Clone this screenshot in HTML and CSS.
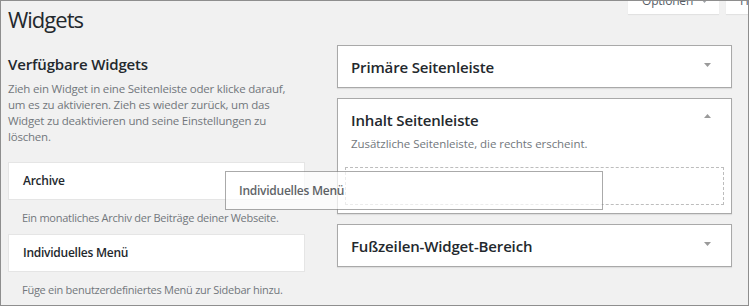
FILE: index.html
```html
<!DOCTYPE html>
<html lang="de">
<head>
<meta charset="utf-8">
<title>Widgets</title>
<link rel="stylesheet" href="styles.css">
</head>
<body>
<div class="frame">
  <header class="header">
    <h1 class="title">Widgets</h1>
    <div class="tabs">
      <div class="tab tab-options">Optionen <svg class="tab-arrow" width="7" height="4" viewBox="0 0 7 4"><polygon points="0,0 7,0 3.5,4" fill="#a0a5aa"/></svg></div>
      <div class="tab tab-help">Hilfe <svg class="tab-arrow" width="7" height="4" viewBox="0 0 7 4"><polygon points="0,0 7,0 3.5,4" fill="#a0a5aa"/></svg></div>
    </div>
  </header>
  <main class="main">
    <section class="available">
      <h2 class="section-title">Verfügbare Widgets</h2>
      <p class="section-desc">Zieh ein Widget in eine Seitenleiste oder klicke darauf, um es zu aktivieren. Zieh es wieder zurück, um das Widget zu deaktivieren und seine Einstellungen zu löschen.</p>
      <div class="widget">Archive</div>
      <p class="widget-desc">Ein monatliches Archiv der Beiträge deiner Webseite.</p>
      <div class="widget widget-second">Individuelles Menü</div>
      <p class="widget-desc">Füge ein benutzerdefiniertes Menü zur Sidebar hinzu.</p>
    </section>
    <section class="sidebars">
      <div class="sidebar">
        <div class="sidebar-head">
          <h3 class="sidebar-title">Primäre Seitenleiste</h3>
          <svg class="arrow arrow-down" width="7" height="4" viewBox="0 0 7 4"><polygon points="0,0 7,0 3.5,4" fill="#9a9a9a"/></svg>
        </div>
      </div>
      <div class="sidebar sidebar-open">
        <div class="sidebar-head">
          <h3 class="sidebar-title">Inhalt Seitenleiste</h3>
          <svg class="arrow arrow-up" width="7" height="4" viewBox="0 0 7 4"><polygon points="0,4 7,4 3.5,0" fill="#9a9a9a"/></svg>
        </div>
        <p class="sidebar-desc">Zusätzliche Seitenleiste, die rechts erscheint.</p>
        <div class="placeholder"></div>
      </div>
      <div class="sidebar">
        <div class="sidebar-head">
          <h3 class="sidebar-title">Fußzeilen-Widget-Bereich</h3>
          <svg class="arrow arrow-down" width="7" height="4" viewBox="0 0 7 4"><polygon points="0,0 7,0 3.5,4" fill="#9a9a9a"/></svg>
        </div>
      </div>
    </section>
  </main>
  <div class="drag-helper">Individuelles Menü</div>
</div>
</body>
</html>
```

FILE: styles.css
```css
* { box-sizing: border-box; }

html, body {
  margin: 0;
  padding: 0;
  background: #ffffff;
}

body {
  font-family: "Open Sans", "Noto Sans", sans-serif;
  color: #23282d;
}

.frame {
  position: relative;
  width: 749px;
  height: 306px;
  border: 1px solid #8e8e8e;
  background: #f1f1f1;
  overflow: hidden;
}

.header {
  display: flex;
  align-items: flex-start;
}

.title {
  flex: 1;
  margin: 4px 0 0 7px;
  font-size: 22px;
  line-height: 29px;
  font-weight: 400;
  letter-spacing: -1px;
  color: #23282d;
}

.tabs {
  display: flex;
  gap: 7px;
  margin-top: -10px;
  margin-right: -48px;
}

.tab {
  height: 23px;
  padding-left: 14px;
  background: #ffffff;
  font-size: 12px;
  line-height: 20px;
  letter-spacing: -0.2px;
  color: #555d66;
  box-shadow: 0 1px 1px rgba(0, 0, 0, 0.06);
  white-space: nowrap;
}

.tab-options { width: 91px; }
.tab-help { width: 70px; }

.tab-arrow {
  margin-left: 5px;
  vertical-align: 2px;
}

.main {
  display: flex;
  align-items: flex-start;
  gap: 32px;
  padding-left: 7px;
}

.available {
  width: 297px;
  margin-top: 20px;
}

.section-title {
  margin: 0;
  font-size: 15px;
  line-height: 20px;
  font-weight: 600;
  letter-spacing: -0.15px;
}

.section-desc {
  max-width: 291px;
  margin: 7px 0 0;
  font-size: 11.5px;
  line-height: 16px;
  letter-spacing: -0.2px;
  color: #72777c;
}

.widget {
  margin-top: 17px;
  height: 38px;
  padding: 10px 14px;
  background: #ffffff;
  border: 1px solid #e5e5e5;
  font-size: 12px;
  line-height: 16px;
  font-weight: 600;
  letter-spacing: -0.25px;
}

.widget-second { margin-top: 8px; }

.widget-desc {
  margin: 10px 0 0;
  padding-left: 14px;
  font-size: 11px;
  line-height: 16px;
  letter-spacing: -0.27px;
  color: #72777c;
  white-space: nowrap;
}

.sidebars {
  width: 395px;
  margin-top: 11px;
  display: flex;
  flex-direction: column;
  gap: 10px;
}

.sidebar {
  background: #ffffff;
  border: 1px solid #a9a9a9;
  box-shadow: 0 1px 1px rgba(0, 0, 0, 0.08);
  padding: 11px 20px 10px 13px;
}

.sidebar-open {
  padding-bottom: 8px;
}

.sidebar-head {
  display: flex;
  justify-content: space-between;
  align-items: flex-start;
}

.sidebar-title {
  margin: 0;
  font-size: 15px;
  line-height: 20px;
  font-weight: 600;
  letter-spacing: -0.15px;
}

.arrow-down { margin-top: 6px; }
.arrow-up { margin-top: 4px; }

.sidebar-desc {
  margin: 6px 0 0;
  font-size: 11.5px;
  line-height: 16px;
  letter-spacing: -0.05px;
  color: #72777c;
}

.placeholder {
  margin: 15px -13px 0 -6px;
  height: 38px;
  border: 1px dashed #bdbdbd;
}

.drag-helper {
  position: absolute;
  left: 224px;
  top: 170px;
  width: 378px;
  height: 39px;
  padding: 11px 13px;
  background: #ffffff;
  border: 1px solid #8a8a8a;
  opacity: 0.72;
  font-size: 12px;
  line-height: 16px;
  font-weight: 600;
  letter-spacing: -0.25px;
  color: #23282d;
}
```
